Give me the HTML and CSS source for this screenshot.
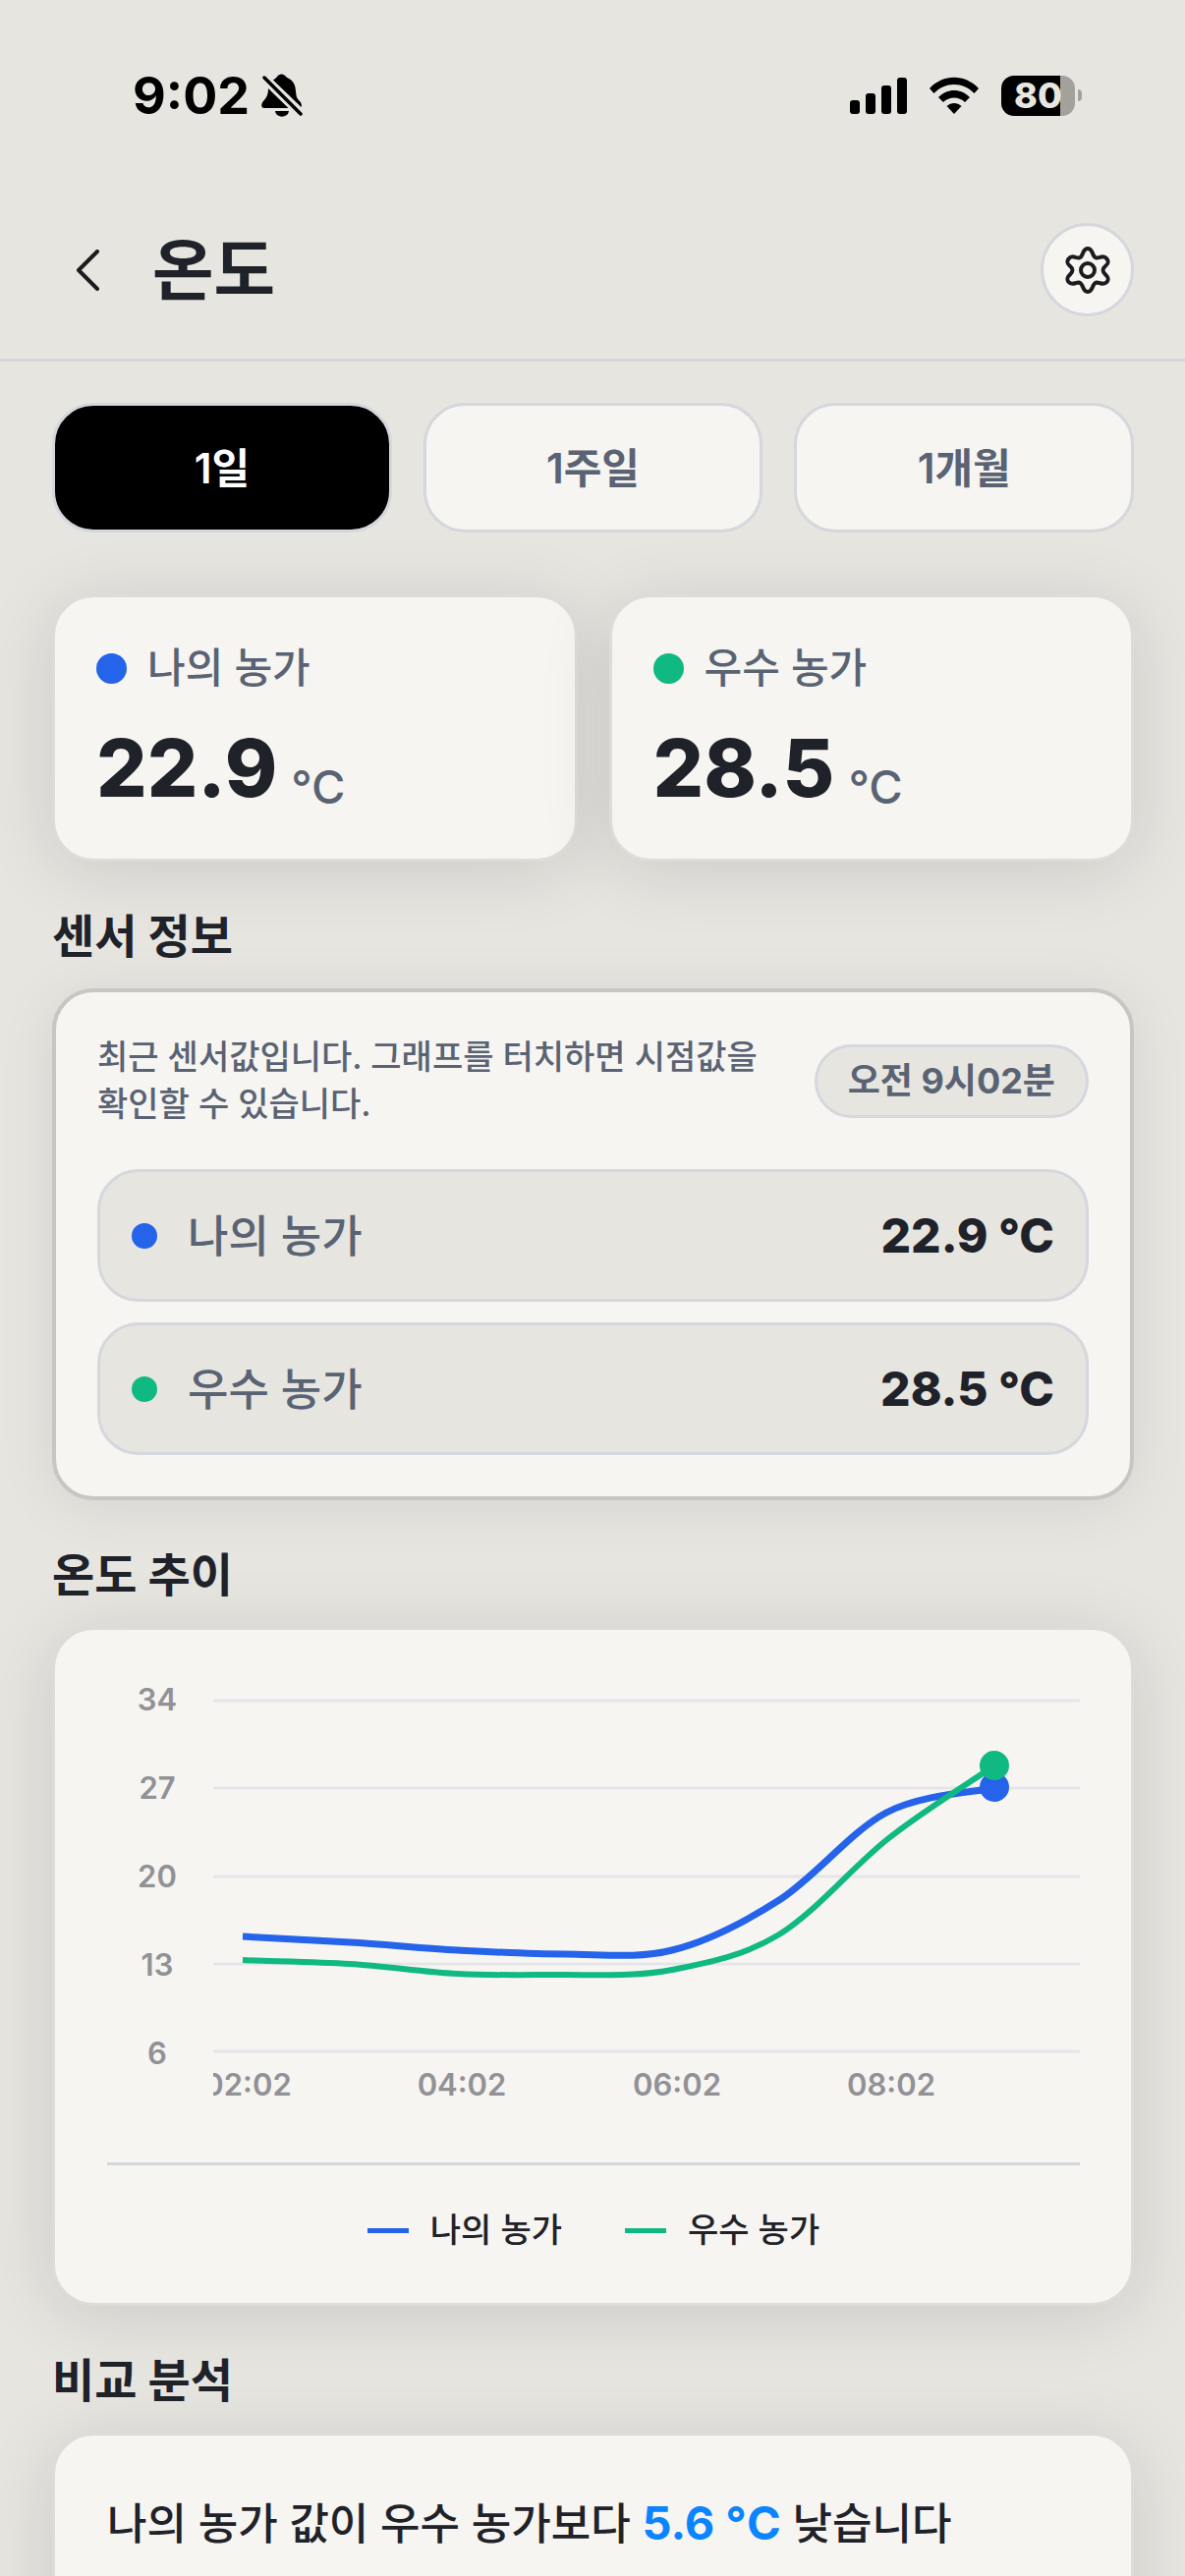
FILE: index.html
```
<!DOCTYPE html>
<html lang="ko">
<head>
    <meta charset="UTF-8">
    <meta name="viewport" content="width=device-width, initial-scale=1.0">
    <title>온도</title>
    <link rel="stylesheet" href="styles.css">
</head>
<body>
    <div class="app">
        <div class="status-bar">
            <div class="status-left">
                <span class="time">9:02</span>
                <svg class="bell" viewBox="0 0 42 44" width="42" height="44">
                    <path d="M7 15 L27.500 35 H3 C-1 35 0 30 2 28 C5 24.500 7 22 7 15 Z"/>
                    <path d="M12 6.500 C14 5 15 4.500 16 3 C18 -0.500 23 -0.500 25 3 C27 5 33 6 34.500 14 C35.500 20 35 24 38 27 C40.500 29.500 41.500 31 40.500 34 Z"/>
                    <path d="M14 38 H28 C27 45.500 15 45.500 14 38 Z"/>
                    <path d="M3 4 L40 41" stroke="#000" stroke-width="3.500" stroke-linecap="round"/>
                </svg>
            </div>
            <div class="status-right">
                <svg class="signal" viewBox="0 0 58 38" width="58" height="38">
                    <rect x="0" y="24" width="10" height="14" rx="3"/>
                    <rect x="16" y="17" width="10" height="21" rx="3"/>
                    <rect x="32" y="9" width="10" height="29" rx="3"/>
                    <rect x="48" y="1" width="10" height="37" rx="3"/>
                </svg>
                <svg class="wifi" viewBox="0 0 52 38" width="52" height="38">
                    <path d="M1 12 C15 -3 37 -3 51 12 L46.500 17 C35 5 17 5 5.500 17 Z"/>
                    <path d="M10 21 C19 11.500 33 11.500 42 21 L37 26 C31 20 21 20 15 26 Z"/>
                    <path d="M18.500 30 C23 26 29 26 33.500 30 L26 38 Z"/>
                </svg>
                <div class="battery">
                    <div class="battery-body">80</div>
                    <div class="battery-tip"></div>
                </div>
            </div>
        </div>

        <header class="header">
            <button class="back-btn" aria-label="뒤로">
                <svg viewBox="0 0 24 42" width="24" height="42">
                    <path d="M22 2 L3 21 L22 40" fill="none" stroke="#1c1c1e" stroke-width="4" stroke-linecap="round" stroke-linejoin="round"/>
                </svg>
            </button>
            <h1 class="title">온도</h1>
            <button class="settings-btn" aria-label="설정">
                <svg viewBox="0 0 48 50" width="48" height="50" fill="none" stroke="#1c1c1e" stroke-width="4">
                    <circle cx="24" cy="25" r="7"/>
                    <path d="M24 3 C30 3 28 12 33 12.500 C37 12.500 40 9 43.500 13.500 C48 20 39.500 20 39.500 25 C39.500 30 48 31 43.500 37 C40 41 37 37.500 33 37.500 C28 38 30 47 24 47 C18 47 20 38 15 37.500 C11 37.500 8 41 4.500 37 C0 31 8.500 30 8.500 25 C8.500 20 0 20 4.500 13.500 C8 9 11 12.500 15 12.500 C20 12 18 3 24 3 Z"/>
                </svg>
            </button>
        </header>

        <main class="content">
            <div class="tabs">
                <button class="tab active">1일</button>
                <button class="tab">1주일</button>
                <button class="tab">1개월</button>
            </div>

            <div class="summary">
                <div class="card summary-card">
                    <div class="summary-label"><span class="dot blue"></span>나의 농가</div>
                    <div class="summary-value">22.9 <span class="unit">°C</span></div>
                </div>
                <div class="card summary-card">
                    <div class="summary-label"><span class="dot green"></span>우수 농가</div>
                    <div class="summary-value">28.5 <span class="unit">°C</span></div>
                </div>
            </div>

            <h2 class="section-title">센서 정보</h2>
            <div class="card sensor-card">
                <div class="sensor-head">
                    <p class="sensor-desc">최근 센서값입니다. 그래프를 터치하면 시점값을 확인할 수 있습니다.</p>
                    <span class="time-badge">오전 9시02분</span>
                </div>
                <div class="sensor-row">
                    <span class="dot small blue"></span>
                    <span class="sensor-name">나의 농가</span>
                    <span class="sensor-value">22.9 °C</span>
                </div>
                <div class="sensor-row">
                    <span class="dot small green"></span>
                    <span class="sensor-name">우수 농가</span>
                    <span class="sensor-value">28.5 °C</span>
                </div>
            </div>

            <h2 class="section-title">온도 추이</h2>
            <div class="card chart-card">
                <svg class="chart" viewBox="0 0 990 448">
                    <defs>
                        <clipPath id="plot"><rect x="108" y="0" width="882" height="448"/></clipPath>
                    </defs>
                    <g class="grid">
                        <path d="M108 30 H990 M108 119 H990 M108 209 H990 M108 298 H990 M108 387 H990"/>
                    </g>
                    <g class="axis">
                        <text x="51" y="40">34</text>
                        <text x="51" y="130">27</text>
                        <text x="51" y="220">20</text>
                        <text x="51" y="310">13</text>
                        <text x="51" y="400">6</text>
                    </g>
                    <g class="axis" clip-path="url(#plot)">
                        <text x="143" y="432">02:02</text>
                        <text x="361" y="432">04:02</text>
                        <text x="580" y="432">06:02</text>
                        <text x="798" y="432">08:02</text>
                    </g>
                    <path class="line-blue" d="M138 270 C156 271 211 274 247 276 C283 278 320 282 357 284 C394 286 430 288 466 288 C502 288 539 293 575 284 C611 275 648 256 684 233 C720 210 757 163 793 144 C829 125 885 123 903 119"/>
                    <circle class="fill-blue" cx="903" cy="118" r="15"/>
                    <path class="line-green" d="M138 294 C156 295 211 296 247 298 C283 300 320 306 357 308 C394 310 430 309 466 309 C502 309 539 311 575 304 C611 297 648 290 684 268 C720 246 757 201 793 172 C829 143 885 109 903 96"/>
                    <circle class="fill-green" cx="903" cy="96" r="15"/>
                </svg>
                <div class="legend">
                    <span class="legend-item"><span class="legend-line blue"></span>나의 농가</span>
                    <span class="legend-item"><span class="legend-line green"></span>우수 농가</span>
                </div>
            </div>

            <h2 class="section-title">비교 분석</h2>
            <div class="card analysis-card">
                <p>나의 농가 값이 우수 농가보다 <strong>5.6 °C</strong> 낮습니다</p>
            </div>
        </main>
    </div>
</body>
</html>
```

FILE: styles.css
```
* {
    box-sizing: border-box;
}
body {
    margin: 0;
    background-color: #e6e5e0;
    color: #1f2229;
    font-family: Inter, "Noto Sans CJK KR", sans-serif;
}
h1, h2, p {
    margin: 0;
}
button {
    font-family: inherit;
    cursor: pointer;
}
.app {
    height: 100vh;
    overflow: hidden;
}

/* status bar */
.status-bar {
    display: flex;
    justify-content: space-between;
    align-items: center;
    height: 194px;
    padding: 0 105px 0 135px;
    color: #000;
}
.status-left,
.status-right {
    display: flex;
    align-items: center;
}
.status-left {
    gap: 12px;
}
.status-right {
    gap: 22px;
}
.time {
    font-size: 52px;
    font-weight: 700;
}
.battery {
    display: flex;
    align-items: center;
    gap: 3px;
}
.battery-body {
    width: 75px;
    height: 41px;
    border-radius: 13px;
    background: linear-gradient(to right, #000 60px, #a2a19c 60px);
    color: #e6e5e0;
    font-size: 36px;
    font-weight: 800;
    line-height: 41px;
    text-align: center;
}
.battery-tip {
    width: 4px;
    height: 12px;
    border-radius: 0 4px 4px 0;
    background-color: #a2a19c;
}

/* header */
.header {
    display: flex;
    align-items: center;
    height: 174px;
    padding: 0 52px 10px 53px;
    border-bottom: 3px solid #d5d7dd;
}
.back-btn {
    display: flex;
    justify-content: center;
    align-items: center;
    width: 72px;
    height: 96px;
    padding: 0;
    border: none;
    background: none;
}
.title {
    flex: 1;
    margin-left: 30px;
    font-size: 68px;
    font-weight: 700;
    line-height: 96px;
}
.settings-btn {
    display: flex;
    justify-content: center;
    align-items: center;
    width: 95px;
    height: 95px;
    padding: 0;
    border: 3px solid #d5d7dd;
    border-radius: 50%;
    background-color: #f6f5f1;
}
.content {
    padding: 42px 52px 0 53px;
}

/* period tabs */
.tabs {
    display: grid;
    grid-template-columns: repeat(3, 1fr);
    gap: 32px;
    margin-bottom: 63px;
}
.tab {
    height: 132px;
    padding: 0 0 6px;
    border: 3px solid #d5d7dd;
    border-radius: 42px;
    background-color: #f6f5f1;
    color: #5a6373;
    font-size: 42px;
    font-weight: 600;
}
.tab.active {
    background-color: #000;
    color: #fff;
}

/* cards */
.card {
    border: 3px solid #dddcd7;
    border-radius: 42px;
    background-color: #f6f5f1;
    box-shadow: 0 9px 72px rgba(0, 0, 0, 0.12);
}
.summary {
    display: grid;
    grid-template-columns: repeat(2, 1fr);
    gap: 32px;
}
.summary-card {
    height: 272px;
    padding: 42px;
}
.summary-label {
    display: flex;
    align-items: center;
    gap: 21px;
    color: #5a6373;
    font-size: 42px;
    font-weight: 500;
    line-height: 60px;
}
.dot {
    width: 31px;
    height: 31px;
    border-radius: 50%;
}
.dot.small {
    width: 26px;
    height: 26px;
}
.blue {
    background-color: #2563eb;
}
.green {
    background-color: #10b981;
}
.summary-value {
    display: flex;
    align-items: flex-end;
    gap: 14px;
    font-size: 81px;
    font-weight: 800;
    line-height: 100px;
    margin-top: 22px;
}
.unit {
    color: #5a6373;
    font-size: 47px;
    font-weight: 500;
    line-height: 62px;
}
.section-title {
    font-size: 47px;
    font-weight: 700;
    line-height: 72px;
    margin-top: 40px;
    margin-bottom: 17px;
}

/* sensor info */
.sensor-card {
    padding: 42px;
    border: 4px solid #c7c6c3;
    box-shadow: 0 6px 60px rgba(0, 0, 0, 0.08);
}
.sensor-head {
    display: flex;
    justify-content: space-between;
    align-items: center;
    gap: 42px;
    margin-bottom: 42px;
}
.sensor-desc {
    color: #5a6373;
    font-size: 34px;
    font-weight: 500;
    line-height: 48px;
    word-break: keep-all;
}
.time-badge {
    padding: 0 31px;
    border: 3px solid #d5d7dd;
    border-radius: 38px;
    background-color: #e6e5e0;
    color: #5a6373;
    font-size: 36px;
    font-weight: 700;
    line-height: 69px;
    white-space: nowrap;
}
.sensor-row {
    display: flex;
    align-items: center;
    height: 135px;
    padding: 0 32px;
    border: 3px solid #d5d7dd;
    border-radius: 42px;
    background-color: #e6e5e0;
}
.sensor-row + .sensor-row {
    margin-top: 21px;
}
.sensor-name {
    flex: 1;
    margin-left: 31px;
    padding-bottom: 4px;
    color: #5a6373;
    font-size: 45px;
    font-weight: 500;
}
.sensor-value {
    font-size: 48px;
    font-weight: 800;
}

/* chart */
.chart-card {
    padding: 42px 52px 50px 53px;
}
.chart {
    display: block;
    width: 100%;
}
.grid {
    stroke: #e5e4ea;
    stroke-width: 3;
}
.axis {
    fill: #919196;
    font-size: 31px;
    font-weight: 600;
    text-anchor: middle;
}
.line-blue,
.line-green {
    fill: none;
    stroke: #2563eb;
    stroke-width: 7;
}
.line-green {
    stroke: #10b981;
    stroke-width: 6;
}
.fill-blue {
    fill: #2563eb;
}
.fill-green {
    fill: #10b981;
}
.legend {
    display: flex;
    justify-content: center;
    gap: 64px;
    margin-top: 52px;
    padding-top: 42px;
    border-top: 3px solid #d5d7dd;
}
.legend-item {
    display: flex;
    align-items: center;
    gap: 22px;
    font-size: 34px;
    font-weight: 500;
    line-height: 48px;
}
.legend-line {
    width: 42px;
    height: 5px;
}

/* analysis */
.analysis-card {
    padding: 56px 53px 120px;
    font-size: 44px;
    font-weight: 500;
    line-height: 66px;
}
.analysis-card strong {
    color: #0a84ff;
    font-size: 47px;
    font-weight: 700;
}
```
